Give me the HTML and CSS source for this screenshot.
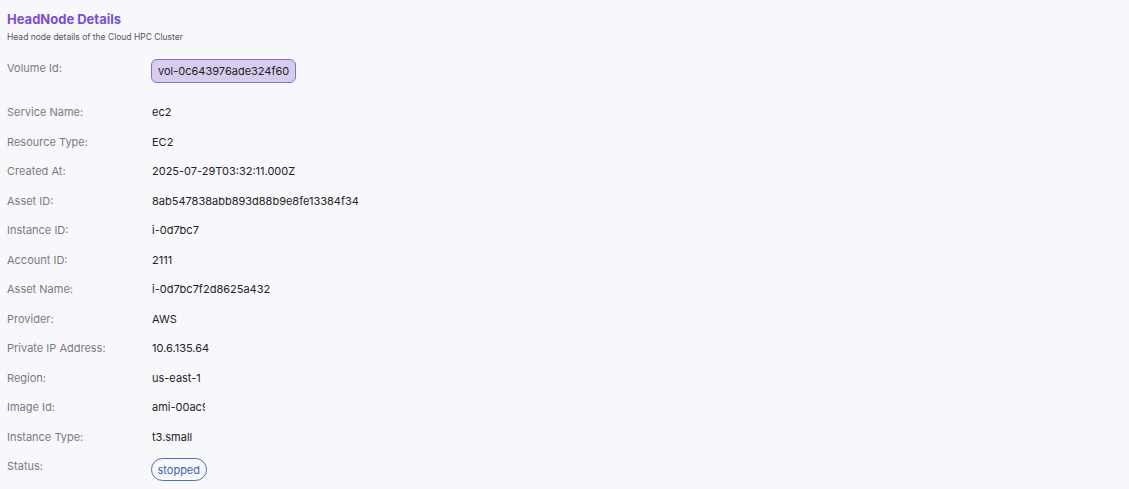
FILE: index.html
```html
<!DOCTYPE html>
<html lang="en">
<head>
  <meta charset="UTF-8">
  <title>HeadNode Details</title>
  <link rel="stylesheet" href="styles.css">
</head>
<body>
  <div class="panel">
    <div class="head">
      <h2>HeadNode Details</h2>
      <p>Head node details of the Cloud HPC Cluster</p>
    </div>

    <div class="details">
      <div class="row volume">
        <span class="label">Volume Id:</span>
        <span class="value"><span class="chip">vol-0c643976ade324f60</span></span>
      </div>
      <div class="row"><span class="label">Service Name:</span><span class="value">ec2</span></div>
      <div class="row"><span class="label">Resource Type:</span><span class="value">EC2</span></div>
      <div class="row"><span class="label">Created At:</span><span class="value">2025-07-29T03:32:11.000Z</span></div>
      <div class="row"><span class="label">Asset ID:</span><span class="value">8ab547838abb893d88b9e8fe13384f34</span></div>
      <div class="row"><span class="label">Instance ID:</span><span class="value">i-0d7bc7</span></div>
      <div class="row"><span class="label">Account ID:</span><span class="value">2111</span></div>
      <div class="row"><span class="label">Asset Name:</span><span class="value">i-0d7bc7f2d8625a432</span></div>
      <div class="row"><span class="label">Provider:</span><span class="value">AWS</span></div>
      <div class="row"><span class="label">Private IP Address:</span><span class="value">10.6.135.64</span></div>
      <div class="row"><span class="label">Region:</span><span class="value">us-east-1</span></div>
      <div class="row"><span class="label">Image Id:</span><span class="value clip">ami-00ac9f3e1b2d</span></div>
      <div class="row"><span class="label">Instance Type:</span><span class="value">t3.small</span></div>
      <div class="row"><span class="label">Status:</span><span class="value"><span class="status">stopped</span></span></div>
    </div>
  </div>
</body>
</html>
```

FILE: styles.css
```css
body {
  margin: 0;
  background: #f8f8fc;
  font-family: Inter, 'Noto Sans', sans-serif;
  color: #222;
}

.panel {
  padding: 12px 7px 0;
}

.head h2 {
  margin: 0;
  font-size: 13px;
  line-height: 14px;
  font-weight: 700;
  color: #7b4fcf;
}

.head p {
  margin: 5px 0 0;
  font-size: 8.5px;
  line-height: 12px;
  color: #555;
}

.details {
  margin-top: 10px;
}

.row {
  display: grid;
  grid-template-columns: 145px auto;
  align-items: start;
  padding: 7.75px 0;
  font-size: 11px;
  line-height: 14px;
}

.label {
  color: #7a7a7a;
}

.value {
  justify-self: start;
}

.clip {
  display: block;
  width: 53px;
  overflow: hidden;
  white-space: nowrap;
}

.chip {
  display: inline-block;
  margin: -2px 0 7px -1px;
  padding: 4px 6px;
  line-height: 14px;
  background: #d7ccee;
  border: 1px solid #8a6dd0;
  border-radius: 6px;
  color: #222;
}

.status {
  display: inline-block;
  margin: -1px 0 0 -1px;
  padding: 3.5px 5.5px;
  line-height: 14px;
  border: 1px solid #4b70b8;
  border-radius: 12px;
  color: #3d64b0;
}
```
